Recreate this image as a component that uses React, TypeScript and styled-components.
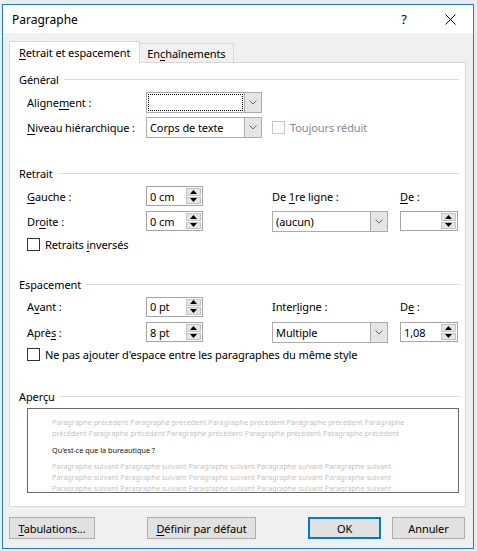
import styled, { createGlobalStyle } from "styled-components";

const GlobalStyle = createGlobalStyle`
  html, body { margin: 0; padding: 0; background: #e9ebee; }
  body {
    font-family: "Noto Sans", "Open Sans", sans-serif;
    font-size: 11px;
    letter-spacing: -0.1px;
    color: #000;
  }
`;

const Screen = styled.div`
  width: 477px;
  height: 551px;
  padding: 4px 0 0 2px;
  box-sizing: border-box;
  overflow: hidden;
`;

const Dialog = styled.div`
  width: 472px;
  height: 545px;
  box-sizing: border-box;
  border: 1px solid #1c7cd5;
  background: #f0f0f0;
  display: flex;
  flex-direction: column;
`;

const TitleBar = styled.div`
  height: 28px;
  background: #fff;
  display: flex;
  align-items: center;
  padding-left: 9px;
  font-size: 12px;
  letter-spacing: 0;
`;

const TitleText = styled.div`
  flex: 1;
`;

const TitleButton = styled.div`
  width: 46px;
  height: 28px;
  display: flex;
  align-items: center;
  justify-content: center;
  font-size: 13px;
`;

const TabRow = styled.div`
  display: flex;
  align-items: flex-end;
  height: 21px;
  margin-top: 8px;
  padding-left: 6px;
`;

const Tab = styled.div<{ $active?: boolean }>`
  box-sizing: border-box;
  height: ${(p) => (p.$active ? "22px" : "19px")};
  margin-bottom: ${(p) => (p.$active ? "-1px" : "0")};
  margin-left: ${(p) => (p.$active ? "0" : "-1px")};
  padding: 0 ${(p) => (p.$active ? "9px" : "7px")};
  border: 1px solid #d9d9d9;
  border-bottom: none;
  background: ${(p) => (p.$active ? "#fff" : "#f0f0f0")};
  display: flex;
  align-items: center;
  position: relative;
  z-index: ${(p) => (p.$active ? 1 : 0)};
`;

const Panel = styled.div`
  height: 445px;
  margin: 0 7px 0 6px;
  box-sizing: border-box;
  border: 1px solid #d9d9d9;
  background: #fff;
  padding: 0 6px 0 9px;
`;

const SectionHead = styled.div<{ $top: number }>`
  margin-top: ${(p) => p.$top}px;
  height: 14px;
  display: flex;
  align-items: center;
  gap: 5px;
  &::after {
    content: "";
    flex: 1;
    height: 1px;
    background: #dcdcdc;
  }
`;

const Grid = styled.div<{ $top: number; $rows: string }>`
  margin-top: ${(p) => p.$top}px;
  padding-left: 8px;
  display: grid;
  grid-template-columns: 119px 126px 128px 58px;
  grid-template-rows: ${(p) => p.$rows};
  row-gap: 5px;
  align-items: center;
`;

const Label = styled.span`
  white-space: nowrap;
`;

const Key = styled.span`
  text-decoration: underline;
  text-underline-offset: 2px;
`;

const Combo = styled.div`
  width: 116px;
  height: 21px;
  box-sizing: border-box;
  border: 1px solid #acacac;
  background: #fff;
  display: flex;
`;

const ComboText = styled.div<{ $focused?: boolean }>`
  flex: 1;
  display: flex;
  align-items: center;
  padding-left: ${(p) => (p.$focused ? "0" : "3px")};
  margin: ${(p) => (p.$focused ? "1px" : "0")};
  outline: ${(p) => (p.$focused ? "1px dotted #000" : "none")};
  outline-offset: -1px;
  background: #fff;
`;

const ComboButton = styled.div`
  width: 16px;
  background: #e5e5e5;
  border-left: 1px solid #acacac;
  display: flex;
  align-items: center;
  justify-content: center;
`;

const Spin = styled.div<{ $w: number }>`
  width: ${(p) => p.$w}px;
  height: 20px;
  box-sizing: border-box;
  border: 1px solid #a5a5a5;
  background: #fff;
  display: flex;
`;

const SpinText = styled.div`
  flex: 1;
  display: flex;
  align-items: center;
  padding-left: 3px;
`;

const SpinButtons = styled.div`
  width: 15px;
  display: flex;
  flex-direction: column;
  gap: 1px;
  padding: 1px 1px 1px 0;
`;

const SpinArrow = styled.div`
  flex: 1;
  background: #e5e5e5;
  border: 1px solid #c4c4c4;
  display: flex;
  align-items: center;
  justify-content: center;
`;

const CheckRow = styled.label<{ $disabled?: boolean }>`
  display: flex;
  align-items: center;
  gap: 5px;
  white-space: nowrap;
  color: ${(p) => (p.$disabled ? "#838a96" : "#000")};
`;

const CheckRowWide = styled(CheckRow)`
  grid-column: 1 / -1;
`;

const Box = styled.span<{ $disabled?: boolean }>`
  width: 13px;
  height: 13px;
  box-sizing: border-box;
  border: 1px solid ${(p) => (p.$disabled ? "#c6c6c6" : "#333")};
  background: #fff;
`;

const Preview = styled.div`
  margin: 5px 0 0 8px;
  height: 85px;
  box-sizing: border-box;
  border: 1px solid #6a6a6a;
  padding: 8px 0 0 24px;
  overflow: hidden;
  font-size: 7.25px;
  line-height: 11px;
  letter-spacing: 0;
`;

const PreviewLine = styled.div<{ $dark?: boolean; $gap?: number }>`
  white-space: nowrap;
  color: ${(p) => (p.$dark ? "#111" : "#c3c3c3")};
  margin-top: ${(p) => p.$gap ?? 0}px;
`;

const Footer = styled.div`
  display: flex;
  align-items: center;
  margin-top: 10px;
  padding: 0 7px 0 6px;
`;

const Button = styled.div<{ $w: number; $gapLeft?: number; $default?: boolean }>`
  width: ${(p) => p.$w}px;
  height: 22px;
  box-sizing: border-box;
  margin-left: ${(p) => p.$gapLeft ?? 0}px;
  border: ${(p) => (p.$default ? "2px solid #0078d7" : "1px solid #adadad")};
  background: #e1e1e1;
  display: flex;
  align-items: center;
  justify-content: center;
  white-space: nowrap;
`;

const Chevron = () => (
  <svg width="8" height="5" viewBox="0 0 8 5">
    <polyline points="0.5,0.5 4,4 7.5,0.5" fill="none" stroke="#6b6b6b" strokeWidth="1" />
  </svg>
);

const Tri = ({ up }: { up?: boolean }) => (
  <svg width="7" height="4" viewBox="0 0 7 4">
    <polygon points={up ? "0,4 3.5,0 7,4" : "0,0 3.5,4 7,0"} fill="#000" />
  </svg>
);

const SpinBox = ({ value, w = 57 }: { value: string; w?: number }) => (
  <Spin $w={w}>
    <SpinText>{value}</SpinText>
    <SpinButtons>
      <SpinArrow><Tri up /></SpinArrow>
      <SpinArrow><Tri /></SpinArrow>
    </SpinButtons>
  </Spin>
);

const ComboBox = ({ value, focused }: { value: string; focused?: boolean }) => (
  <Combo>
    <ComboText $focused={focused}>{value}</ComboText>
    <ComboButton><Chevron /></ComboButton>
  </Combo>
);

const prev1 = "Paragraphe précédent Paragraphe précédent Paragraphe précédent Paragraphe précédent Paragraphe";
const prev2 = "précédent Paragraphe précédent Paragraphe précédent Paragraphe précédent Paragraphe précédent";
const next = "Paragraphe suivant Paragraphe suivant Paragraphe suivant Paragraphe suivant Paragraphe suivant";

export default function App() {
  return (
    <Screen>
      <GlobalStyle />
      <Dialog>
        <TitleBar>
          <TitleText>Paragraphe</TitleText>
          <TitleButton>?</TitleButton>
          <TitleButton>
            <svg width="11" height="11" viewBox="0 0 11 11">
              <line x1="0.5" y1="0.5" x2="10.5" y2="10.5" stroke="#000" strokeWidth="1" />
              <line x1="10.5" y1="0.5" x2="0.5" y2="10.5" stroke="#000" strokeWidth="1" />
            </svg>
          </TitleButton>
        </TitleBar>

        <TabRow>
          <Tab $active><span><Key>R</Key>etrait et espacement</span></Tab>
          <Tab><span>En<Key>c</Key>haînements</span></Tab>
        </TabRow>

        <Panel>
          <SectionHead $top={9}>Général</SectionHead>
          <Grid $top={6} $rows="20px 21px">
            <Label>Aligne<Key>m</Key>ent :</Label>
            <ComboBox value="" focused />
            <span />
            <span />
            <Label><Key>N</Key>iveau hiérarchique :</Label>
            <ComboBox value="Corps de texte" />
            <CheckRow $disabled>
              <Box $disabled />
              <span>Toujours réduit</span>
            </CheckRow>
            <span />
          </Grid>

          <SectionHead $top={28}>Retrait</SectionHead>
          <Grid $top={7} $rows="18px 22px 14px">
            <Label><Key>G</Key>auche :</Label>
            <SpinBox value="0 cm" />
            <Label>De <Key>1</Key>re ligne :</Label>
            <Label><Key>D</Key>e :</Label>
            <Label>Dr<Key>o</Key>ite :</Label>
            <SpinBox value="0 cm" />
            <ComboBox value="(aucun)" />
            <SpinBox value="" w={58} />
            <CheckRowWide>
              <Box />
              <span>Retraits <Key>i</Key>nversés</span>
            </CheckRowWide>
          </Grid>

          <SectionHead $top={26}>Espacement</SectionHead>
          <Grid $top={6} $rows="19px 22px 13px">
            <Label>A<Key>v</Key>ant :</Label>
            <SpinBox value="0 pt" />
            <Label>Inter<Key>l</Key>igne :</Label>
            <Label>D<Key>e</Key> :</Label>
            <Label>Aprè<Key>s</Key> :</Label>
            <SpinBox value="8 pt" />
            <ComboBox value="Multiple" />
            <SpinBox value="1,08" w={58} />
            <CheckRowWide>
              <Box />
              <span>Ne pas a<Key>j</Key>outer d'espace entre les paragraphes du même style</span>
            </CheckRowWide>
          </Grid>

          <SectionHead $top={28}>Aperçu</SectionHead>
          <Preview>
            <PreviewLine>{prev1}</PreviewLine>
            <PreviewLine>{prev2}</PreviewLine>
            <PreviewLine $dark $gap={6}>Qu'est-ce que la bureautique ?</PreviewLine>
            <PreviewLine $gap={5}>{next}</PreviewLine>
            <PreviewLine>{next}</PreviewLine>
            <PreviewLine>{next}</PreviewLine>
          </Preview>
        </Panel>

        <Footer>
          <Button $w={86}><span><Key>T</Key>abulations...</span></Button>
          <Button $w={109} $gapLeft={52}><span><Key>D</Key>éfinir par défaut</span></Button>
          <Button $w={73} $gapLeft={52} $default>OK</Button>
          <Button $w={73} $gapLeft={11}>Annuler</Button>
        </Footer>
      </Dialog>
    </Screen>
  );
}
